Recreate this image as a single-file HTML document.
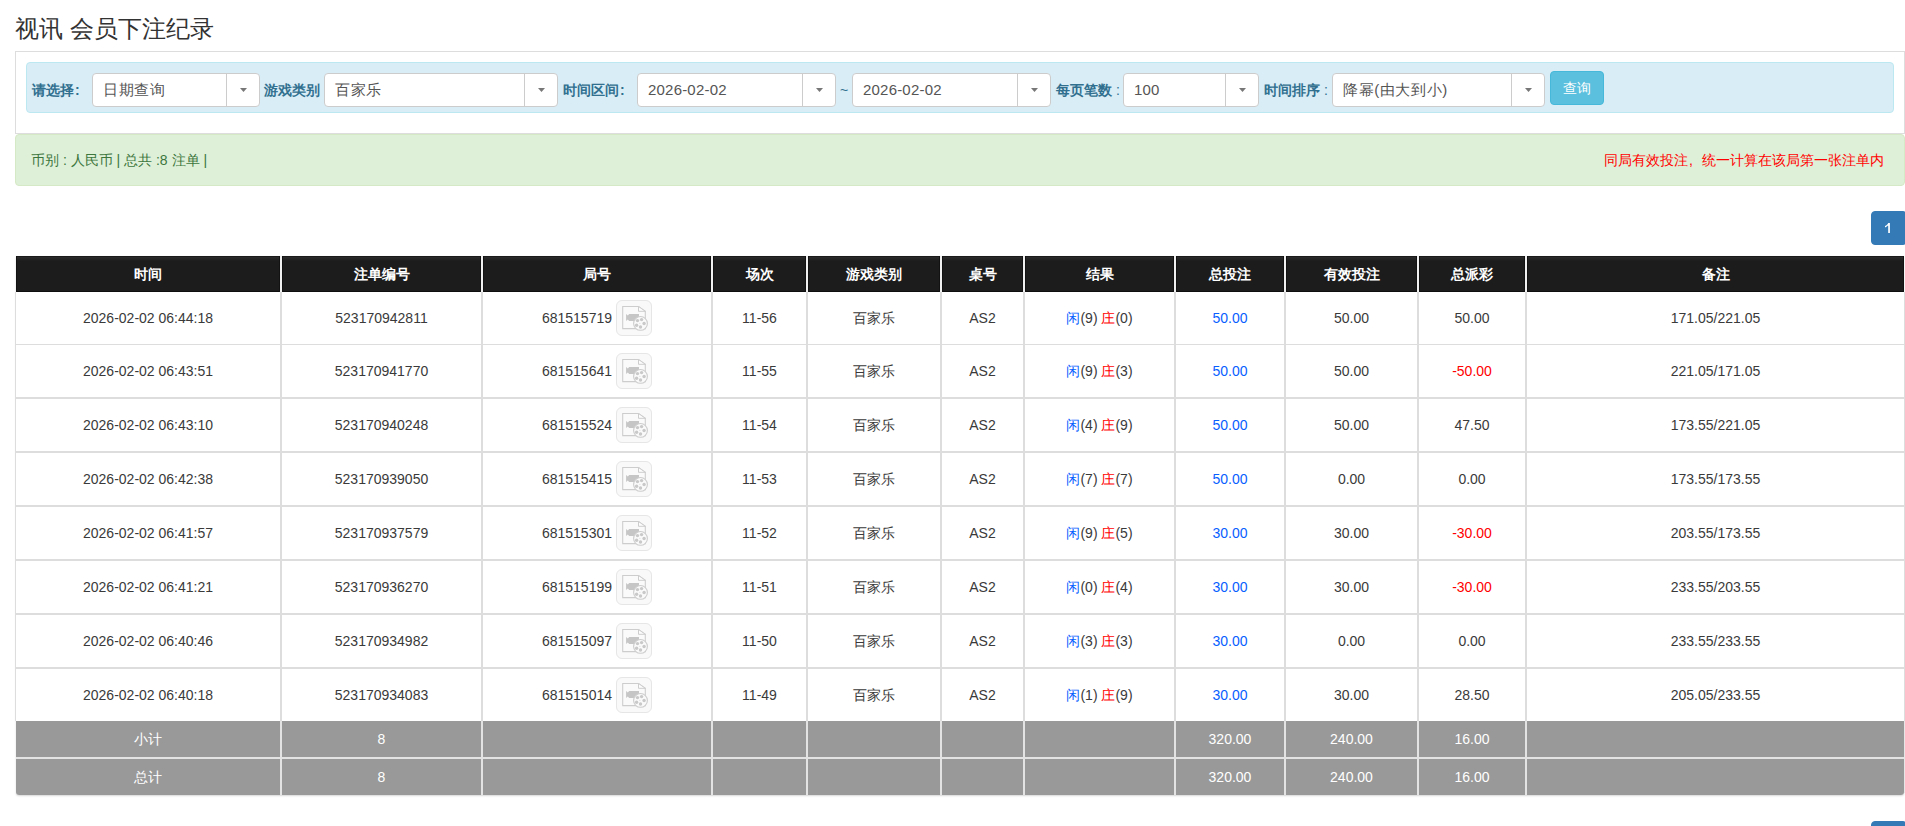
<!DOCTYPE html>
<html><head><meta charset="utf-8"><title>视讯 会员下注纪录</title>
<style>
*{box-sizing:border-box}
html,body{margin:0;padding:0;background:#fff;width:1905px;height:826px;overflow:hidden}
body{font-family:"Liberation Sans",sans-serif;color:#333;font-size:14px;position:relative}
.a{position:absolute;white-space:nowrap}
.title{left:15px;top:11px;font-size:24px;line-height:36px;color:#333}
.panel{left:15px;top:51px;width:1890px;height:83px;border:1px solid #ddd;background:#fff}
.bar{left:26px;top:62px;width:1868px;height:51px;background:#d9edf7;border:1px solid #bce8f1;border-radius:4px}
.lbl{font-weight:bold;color:#31708f;font-size:14px;line-height:20px;top:80px}
.sel{top:73px;height:34px;border:1px solid #ccc;border-radius:4px;background:#fff}
.sel .t{position:absolute;left:11px;top:0;line-height:32px;font-size:15px;color:#555}
.sel .d{position:absolute;top:0;bottom:0;width:1px;background:#ccc}
.sel .c2{position:absolute;top:14px}
.btn{left:1550px;top:71px;width:54px;height:34px;background:#5bc0de;border:1px solid #46b8da;border-radius:4px;color:#fff;font-size:14px;line-height:32px;text-align:center}
.alert{left:15px;top:134px;width:1890px;height:52px;background:#dff0d8;border:1px solid #d6e9c6;border-radius:4px}
.gtxt{left:31px;top:150px;line-height:20px;color:#3c763d;font-size:14px}
.rtxt{right:21px;top:150px;line-height:20px;color:#f00;font-size:14px}
.pg{left:1871px;width:36px;height:34px;background:#337ab7;border:1px solid #337ab7;border-radius:4px;color:#fff;font-size:14px;line-height:32px;text-align:center;padding-right:2px}
.tbl{left:16px;top:256px;width:1888px;height:539px;border-radius:0 0 3px 3px;box-shadow:0 1px 2px rgba(0,0,0,.16)}
.hd{left:16px;top:256px;width:1888px;height:36px;background:linear-gradient(#1a1a1a 0,#1a1a1a 1px,#2b2b2b 1px,#242424 3px,#1c1c1c 5px,#1c1c1c 35px,#0e0e0e 35px)}
.th{top:256px;height:36px;box-shadow:inset 1px 0 #121212,inset -1px 0 #121212;line-height:36px;color:#fff;font-weight:bold;text-align:center;font-size:14px}
.td{text-align:center;font-size:14px;color:#3a3a3a}
.gray{background:#999}
.vs{width:2px;background:#ddd}
.hs{background:#ddd;left:15px;width:1890px}
.b{color:#0860ff}
.r{color:#f00}
.ic{width:36px;height:36px;border:1px solid #e6e6e6;border-radius:6px;background:#f9f9f9}
.ic svg{position:absolute;left:-1px;top:-1px}
</style></head><body>
<div class="a title">视讯 会员下注纪录</div>
<div class="a panel"></div>
<div class="a bar"></div>

<div class="a lbl" style="left:32px">请选择<span style="margin-left:1px">:</span></div>
<div class="a sel" style="left:92px;width:168px"><div class="t" style="left:10px;letter-spacing:0.6px">日期查询</div><div class="d" style="left:133px"></div><svg class="c2" style="left:147.0px" width="7" height="4" viewBox="0 0 7 4"><path d="M0 0H7L3.5 4Z" fill="#777"/></svg></div>
<div class="a lbl" style="left:264px">游戏类别</div>
<div class="a sel" style="left:324px;width:234px"><div class="t" style="left:10px;letter-spacing:0.6px">百家乐</div><div class="d" style="left:199px"></div><svg class="c2" style="left:213.0px" width="7" height="4" viewBox="0 0 7 4"><path d="M0 0H7L3.5 4Z" fill="#777"/></svg></div>
<div class="a lbl" style="left:563px">时间区间<span style="margin-left:1px">:</span></div>
<div class="a sel" style="left:637px;width:199px"><div class="t" style="left:10px;letter-spacing:0.2px">2026-02-02</div><div class="d" style="left:164px"></div><svg class="c2" style="left:178.0px" width="7" height="4" viewBox="0 0 7 4"><path d="M0 0H7L3.5 4Z" fill="#777"/></svg></div>
<div class="a" style="left:840px;top:80px;line-height:20px;color:#31708f;font-size:14px">~</div>
<div class="a sel" style="left:852px;width:199px"><div class="t" style="left:10px;letter-spacing:0.2px">2026-02-02</div><div class="d" style="left:164px"></div><svg class="c2" style="left:178.0px" width="7" height="4" viewBox="0 0 7 4"><path d="M0 0H7L3.5 4Z" fill="#777"/></svg></div>
<div class="a lbl" style="left:1056px">每页笔数<span style="font-weight:normal"> :</span></div>
<div class="a sel" style="left:1123px;width:136px"><div class="t" style="left:10px;letter-spacing:0.2px">100</div><div class="d" style="left:101px"></div><svg class="c2" style="left:115.0px" width="7" height="4" viewBox="0 0 7 4"><path d="M0 0H7L3.5 4Z" fill="#777"/></svg></div>
<div class="a lbl" style="left:1264px">时间排序<span style="font-weight:normal"> :</span></div>
<div class="a sel" style="left:1332px;width:213px"><div class="t" style="left:10px;letter-spacing:0.6px">降幂(由大到小)</div><div class="d" style="left:178px"></div><svg class="c2" style="left:192.0px" width="7" height="4" viewBox="0 0 7 4"><path d="M0 0H7L3.5 4Z" fill="#777"/></svg></div>
<div class="a btn">查询</div>
<div class="a alert"></div>
<div class="a gtxt">币别 : 人民币 | 总共 :8 注单 |</div>
<div class="a rtxt">同局有效投注<span style="display:inline-block;width:14px;padding-left:1px">,</span>统一计算在该局第一张注单内</div>
<div class="a pg" style="top:211px"><svg style="position:absolute;left:12px;top:10px" width="10" height="12" viewBox="0 0 10 12"><path d="M4.2 1H5.9V11H4.2Z M4.2 1C3.7 2.4 2.6 3.4 1 3.9V5.4C2.3 5 3.4 4.3 4.2 3.3Z" fill="#fff"/></svg></div>
<div class="a pg" style="top:821px">1</div>
<div class="a tbl"></div>
<div class="a" style="left:15px;top:292px;width:1890px;height:429px;background:#fff;border-left:1px solid #ddd;border-right:1px solid #ddd"></div>
<div class="a hd"></div>
<div class="a th" style="left:16px;width:264px">时间</div>
<div class="a th" style="left:282px;width:199px">注单编号</div>
<div class="a th" style="left:483px;width:228px">局号</div>
<div class="a th" style="left:713px;width:93px">场次</div>
<div class="a th" style="left:808px;width:132px">游戏类别</div>
<div class="a th" style="left:942px;width:81px">桌号</div>
<div class="a th" style="left:1025px;width:149px">结果</div>
<div class="a th" style="left:1176px;width:108px">总投注</div>
<div class="a th" style="left:1286px;width:131px">有效投注</div>
<div class="a th" style="left:1419px;width:106px">总派彩</div>
<div class="a th" style="left:1527px;width:377px">备注</div>
<div class="a" style="left:280px;top:256px;width:2px;height:36px;background:#f0f0f0"></div>
<div class="a vs" style="left:280px;top:292px;height:429px"></div>
<div class="a" style="left:481px;top:256px;width:2px;height:36px;background:#f0f0f0"></div>
<div class="a vs" style="left:481px;top:292px;height:429px"></div>
<div class="a" style="left:711px;top:256px;width:2px;height:36px;background:#f0f0f0"></div>
<div class="a vs" style="left:711px;top:292px;height:429px"></div>
<div class="a" style="left:806px;top:256px;width:2px;height:36px;background:#f0f0f0"></div>
<div class="a vs" style="left:806px;top:292px;height:429px"></div>
<div class="a" style="left:940px;top:256px;width:2px;height:36px;background:#f0f0f0"></div>
<div class="a vs" style="left:940px;top:292px;height:429px"></div>
<div class="a" style="left:1023px;top:256px;width:2px;height:36px;background:#f0f0f0"></div>
<div class="a vs" style="left:1023px;top:292px;height:429px"></div>
<div class="a" style="left:1174px;top:256px;width:2px;height:36px;background:#f0f0f0"></div>
<div class="a vs" style="left:1174px;top:292px;height:429px"></div>
<div class="a" style="left:1284px;top:256px;width:2px;height:36px;background:#f0f0f0"></div>
<div class="a vs" style="left:1284px;top:292px;height:429px"></div>
<div class="a" style="left:1417px;top:256px;width:2px;height:36px;background:#f0f0f0"></div>
<div class="a vs" style="left:1417px;top:292px;height:429px"></div>
<div class="a" style="left:1525px;top:256px;width:2px;height:36px;background:#f0f0f0"></div>
<div class="a vs" style="left:1525px;top:292px;height:429px"></div>
<div class="a hs" style="top:344px;height:1px"></div>
<div class="a hs" style="top:397px;height:2px"></div>
<div class="a hs" style="top:451px;height:2px"></div>
<div class="a hs" style="top:505px;height:2px"></div>
<div class="a hs" style="top:559px;height:2px"></div>
<div class="a hs" style="top:613px;height:2px"></div>
<div class="a hs" style="top:667px;height:2px"></div>
<div class="a td" style="left:16px;top:292px;width:264px;height:52px;line-height:52px">2026-02-02 06:44:18</div>
<div class="a td" style="left:282px;top:292px;width:199px;height:52px;line-height:52px">523170942811</div>
<div class="a td" style="left:483px;top:292px;width:228px;height:52px;line-height:52px;text-align:left"><span class="a" style="right:99px;top:0">681515719</span><div class="a ic" style="left:133px;top:8px"><svg width="36" height="36" viewBox="0 0 36 36"><path d="M6.7 6.5H22.5L29.3 11.3V28.6H6.7Z" fill="#fafafa" stroke="#cdcdcd" stroke-width="1.1"/><path d="M22.5 6.5V11.3H29.3Z" fill="#fdfdfd" stroke="#cdcdcd" stroke-width="1" stroke-linejoin="round"/><path d="M10.1 14L11.8 15.6L13.2 14H23V21H13.2L11.8 19.4L10.1 21Z" fill="#c6c6c6"/><circle cx="24.5" cy="23.4" r="6.9" fill="#fafafa" stroke="#cdcdcd" stroke-width="1.1"/><circle cx="21.5" cy="20.6" r="1.7" fill="#c9c9c9"/><circle cx="25.6" cy="19.6" r="1.7" fill="#c9c9c9"/><circle cx="28.1" cy="23.5" r="1.7" fill="#c9c9c9"/><circle cx="24.5" cy="27" r="1.7" fill="#c9c9c9"/><circle cx="20.6" cy="25.3" r="1.7" fill="#c9c9c9"/><circle cx="23.9" cy="23.3" r="0.5" fill="#d0d0d0"/></svg></div></div>
<div class="a td" style="left:713px;top:292px;width:93px;height:52px;line-height:52px">11-56</div>
<div class="a td" style="left:808px;top:292px;width:132px;height:52px;line-height:52px">百家乐</div>
<div class="a td" style="left:942px;top:292px;width:81px;height:52px;line-height:52px">AS2</div>
<div class="a td" style="left:1025px;top:292px;width:149px;height:52px;line-height:52px"><span class="b">闲</span>(9) <span class="r">庄</span>(0)</div>
<div class="a td b" style="left:1176px;top:292px;width:108px;height:52px;line-height:52px">50.00</div>
<div class="a td" style="left:1286px;top:292px;width:131px;height:52px;line-height:52px">50.00</div>
<div class="a td " style="left:1419px;top:292px;width:106px;height:52px;line-height:52px">50.00</div>
<div class="a td" style="left:1527px;top:292px;width:377px;height:52px;line-height:52px">171.05/221.05</div>
<div class="a td" style="left:16px;top:345px;width:264px;height:52px;line-height:52px">2026-02-02 06:43:51</div>
<div class="a td" style="left:282px;top:345px;width:199px;height:52px;line-height:52px">523170941770</div>
<div class="a td" style="left:483px;top:345px;width:228px;height:52px;line-height:52px;text-align:left"><span class="a" style="right:99px;top:0">681515641</span><div class="a ic" style="left:133px;top:8px"><svg width="36" height="36" viewBox="0 0 36 36"><path d="M6.7 6.5H22.5L29.3 11.3V28.6H6.7Z" fill="#fafafa" stroke="#cdcdcd" stroke-width="1.1"/><path d="M22.5 6.5V11.3H29.3Z" fill="#fdfdfd" stroke="#cdcdcd" stroke-width="1" stroke-linejoin="round"/><path d="M10.1 14L11.8 15.6L13.2 14H23V21H13.2L11.8 19.4L10.1 21Z" fill="#c6c6c6"/><circle cx="24.5" cy="23.4" r="6.9" fill="#fafafa" stroke="#cdcdcd" stroke-width="1.1"/><circle cx="21.5" cy="20.6" r="1.7" fill="#c9c9c9"/><circle cx="25.6" cy="19.6" r="1.7" fill="#c9c9c9"/><circle cx="28.1" cy="23.5" r="1.7" fill="#c9c9c9"/><circle cx="24.5" cy="27" r="1.7" fill="#c9c9c9"/><circle cx="20.6" cy="25.3" r="1.7" fill="#c9c9c9"/><circle cx="23.9" cy="23.3" r="0.5" fill="#d0d0d0"/></svg></div></div>
<div class="a td" style="left:713px;top:345px;width:93px;height:52px;line-height:52px">11-55</div>
<div class="a td" style="left:808px;top:345px;width:132px;height:52px;line-height:52px">百家乐</div>
<div class="a td" style="left:942px;top:345px;width:81px;height:52px;line-height:52px">AS2</div>
<div class="a td" style="left:1025px;top:345px;width:149px;height:52px;line-height:52px"><span class="b">闲</span>(9) <span class="r">庄</span>(3)</div>
<div class="a td b" style="left:1176px;top:345px;width:108px;height:52px;line-height:52px">50.00</div>
<div class="a td" style="left:1286px;top:345px;width:131px;height:52px;line-height:52px">50.00</div>
<div class="a td r" style="left:1419px;top:345px;width:106px;height:52px;line-height:52px">-50.00</div>
<div class="a td" style="left:1527px;top:345px;width:377px;height:52px;line-height:52px">221.05/171.05</div>
<div class="a td" style="left:16px;top:399px;width:264px;height:52px;line-height:52px">2026-02-02 06:43:10</div>
<div class="a td" style="left:282px;top:399px;width:199px;height:52px;line-height:52px">523170940248</div>
<div class="a td" style="left:483px;top:399px;width:228px;height:52px;line-height:52px;text-align:left"><span class="a" style="right:99px;top:0">681515524</span><div class="a ic" style="left:133px;top:8px"><svg width="36" height="36" viewBox="0 0 36 36"><path d="M6.7 6.5H22.5L29.3 11.3V28.6H6.7Z" fill="#fafafa" stroke="#cdcdcd" stroke-width="1.1"/><path d="M22.5 6.5V11.3H29.3Z" fill="#fdfdfd" stroke="#cdcdcd" stroke-width="1" stroke-linejoin="round"/><path d="M10.1 14L11.8 15.6L13.2 14H23V21H13.2L11.8 19.4L10.1 21Z" fill="#c6c6c6"/><circle cx="24.5" cy="23.4" r="6.9" fill="#fafafa" stroke="#cdcdcd" stroke-width="1.1"/><circle cx="21.5" cy="20.6" r="1.7" fill="#c9c9c9"/><circle cx="25.6" cy="19.6" r="1.7" fill="#c9c9c9"/><circle cx="28.1" cy="23.5" r="1.7" fill="#c9c9c9"/><circle cx="24.5" cy="27" r="1.7" fill="#c9c9c9"/><circle cx="20.6" cy="25.3" r="1.7" fill="#c9c9c9"/><circle cx="23.9" cy="23.3" r="0.5" fill="#d0d0d0"/></svg></div></div>
<div class="a td" style="left:713px;top:399px;width:93px;height:52px;line-height:52px">11-54</div>
<div class="a td" style="left:808px;top:399px;width:132px;height:52px;line-height:52px">百家乐</div>
<div class="a td" style="left:942px;top:399px;width:81px;height:52px;line-height:52px">AS2</div>
<div class="a td" style="left:1025px;top:399px;width:149px;height:52px;line-height:52px"><span class="b">闲</span>(4) <span class="r">庄</span>(9)</div>
<div class="a td b" style="left:1176px;top:399px;width:108px;height:52px;line-height:52px">50.00</div>
<div class="a td" style="left:1286px;top:399px;width:131px;height:52px;line-height:52px">50.00</div>
<div class="a td " style="left:1419px;top:399px;width:106px;height:52px;line-height:52px">47.50</div>
<div class="a td" style="left:1527px;top:399px;width:377px;height:52px;line-height:52px">173.55/221.05</div>
<div class="a td" style="left:16px;top:453px;width:264px;height:52px;line-height:52px">2026-02-02 06:42:38</div>
<div class="a td" style="left:282px;top:453px;width:199px;height:52px;line-height:52px">523170939050</div>
<div class="a td" style="left:483px;top:453px;width:228px;height:52px;line-height:52px;text-align:left"><span class="a" style="right:99px;top:0">681515415</span><div class="a ic" style="left:133px;top:8px"><svg width="36" height="36" viewBox="0 0 36 36"><path d="M6.7 6.5H22.5L29.3 11.3V28.6H6.7Z" fill="#fafafa" stroke="#cdcdcd" stroke-width="1.1"/><path d="M22.5 6.5V11.3H29.3Z" fill="#fdfdfd" stroke="#cdcdcd" stroke-width="1" stroke-linejoin="round"/><path d="M10.1 14L11.8 15.6L13.2 14H23V21H13.2L11.8 19.4L10.1 21Z" fill="#c6c6c6"/><circle cx="24.5" cy="23.4" r="6.9" fill="#fafafa" stroke="#cdcdcd" stroke-width="1.1"/><circle cx="21.5" cy="20.6" r="1.7" fill="#c9c9c9"/><circle cx="25.6" cy="19.6" r="1.7" fill="#c9c9c9"/><circle cx="28.1" cy="23.5" r="1.7" fill="#c9c9c9"/><circle cx="24.5" cy="27" r="1.7" fill="#c9c9c9"/><circle cx="20.6" cy="25.3" r="1.7" fill="#c9c9c9"/><circle cx="23.9" cy="23.3" r="0.5" fill="#d0d0d0"/></svg></div></div>
<div class="a td" style="left:713px;top:453px;width:93px;height:52px;line-height:52px">11-53</div>
<div class="a td" style="left:808px;top:453px;width:132px;height:52px;line-height:52px">百家乐</div>
<div class="a td" style="left:942px;top:453px;width:81px;height:52px;line-height:52px">AS2</div>
<div class="a td" style="left:1025px;top:453px;width:149px;height:52px;line-height:52px"><span class="b">闲</span>(7) <span class="r">庄</span>(7)</div>
<div class="a td b" style="left:1176px;top:453px;width:108px;height:52px;line-height:52px">50.00</div>
<div class="a td" style="left:1286px;top:453px;width:131px;height:52px;line-height:52px">0.00</div>
<div class="a td " style="left:1419px;top:453px;width:106px;height:52px;line-height:52px">0.00</div>
<div class="a td" style="left:1527px;top:453px;width:377px;height:52px;line-height:52px">173.55/173.55</div>
<div class="a td" style="left:16px;top:507px;width:264px;height:52px;line-height:52px">2026-02-02 06:41:57</div>
<div class="a td" style="left:282px;top:507px;width:199px;height:52px;line-height:52px">523170937579</div>
<div class="a td" style="left:483px;top:507px;width:228px;height:52px;line-height:52px;text-align:left"><span class="a" style="right:99px;top:0">681515301</span><div class="a ic" style="left:133px;top:8px"><svg width="36" height="36" viewBox="0 0 36 36"><path d="M6.7 6.5H22.5L29.3 11.3V28.6H6.7Z" fill="#fafafa" stroke="#cdcdcd" stroke-width="1.1"/><path d="M22.5 6.5V11.3H29.3Z" fill="#fdfdfd" stroke="#cdcdcd" stroke-width="1" stroke-linejoin="round"/><path d="M10.1 14L11.8 15.6L13.2 14H23V21H13.2L11.8 19.4L10.1 21Z" fill="#c6c6c6"/><circle cx="24.5" cy="23.4" r="6.9" fill="#fafafa" stroke="#cdcdcd" stroke-width="1.1"/><circle cx="21.5" cy="20.6" r="1.7" fill="#c9c9c9"/><circle cx="25.6" cy="19.6" r="1.7" fill="#c9c9c9"/><circle cx="28.1" cy="23.5" r="1.7" fill="#c9c9c9"/><circle cx="24.5" cy="27" r="1.7" fill="#c9c9c9"/><circle cx="20.6" cy="25.3" r="1.7" fill="#c9c9c9"/><circle cx="23.9" cy="23.3" r="0.5" fill="#d0d0d0"/></svg></div></div>
<div class="a td" style="left:713px;top:507px;width:93px;height:52px;line-height:52px">11-52</div>
<div class="a td" style="left:808px;top:507px;width:132px;height:52px;line-height:52px">百家乐</div>
<div class="a td" style="left:942px;top:507px;width:81px;height:52px;line-height:52px">AS2</div>
<div class="a td" style="left:1025px;top:507px;width:149px;height:52px;line-height:52px"><span class="b">闲</span>(9) <span class="r">庄</span>(5)</div>
<div class="a td b" style="left:1176px;top:507px;width:108px;height:52px;line-height:52px">30.00</div>
<div class="a td" style="left:1286px;top:507px;width:131px;height:52px;line-height:52px">30.00</div>
<div class="a td r" style="left:1419px;top:507px;width:106px;height:52px;line-height:52px">-30.00</div>
<div class="a td" style="left:1527px;top:507px;width:377px;height:52px;line-height:52px">203.55/173.55</div>
<div class="a td" style="left:16px;top:561px;width:264px;height:52px;line-height:52px">2026-02-02 06:41:21</div>
<div class="a td" style="left:282px;top:561px;width:199px;height:52px;line-height:52px">523170936270</div>
<div class="a td" style="left:483px;top:561px;width:228px;height:52px;line-height:52px;text-align:left"><span class="a" style="right:99px;top:0">681515199</span><div class="a ic" style="left:133px;top:8px"><svg width="36" height="36" viewBox="0 0 36 36"><path d="M6.7 6.5H22.5L29.3 11.3V28.6H6.7Z" fill="#fafafa" stroke="#cdcdcd" stroke-width="1.1"/><path d="M22.5 6.5V11.3H29.3Z" fill="#fdfdfd" stroke="#cdcdcd" stroke-width="1" stroke-linejoin="round"/><path d="M10.1 14L11.8 15.6L13.2 14H23V21H13.2L11.8 19.4L10.1 21Z" fill="#c6c6c6"/><circle cx="24.5" cy="23.4" r="6.9" fill="#fafafa" stroke="#cdcdcd" stroke-width="1.1"/><circle cx="21.5" cy="20.6" r="1.7" fill="#c9c9c9"/><circle cx="25.6" cy="19.6" r="1.7" fill="#c9c9c9"/><circle cx="28.1" cy="23.5" r="1.7" fill="#c9c9c9"/><circle cx="24.5" cy="27" r="1.7" fill="#c9c9c9"/><circle cx="20.6" cy="25.3" r="1.7" fill="#c9c9c9"/><circle cx="23.9" cy="23.3" r="0.5" fill="#d0d0d0"/></svg></div></div>
<div class="a td" style="left:713px;top:561px;width:93px;height:52px;line-height:52px">11-51</div>
<div class="a td" style="left:808px;top:561px;width:132px;height:52px;line-height:52px">百家乐</div>
<div class="a td" style="left:942px;top:561px;width:81px;height:52px;line-height:52px">AS2</div>
<div class="a td" style="left:1025px;top:561px;width:149px;height:52px;line-height:52px"><span class="b">闲</span>(0) <span class="r">庄</span>(4)</div>
<div class="a td b" style="left:1176px;top:561px;width:108px;height:52px;line-height:52px">30.00</div>
<div class="a td" style="left:1286px;top:561px;width:131px;height:52px;line-height:52px">30.00</div>
<div class="a td r" style="left:1419px;top:561px;width:106px;height:52px;line-height:52px">-30.00</div>
<div class="a td" style="left:1527px;top:561px;width:377px;height:52px;line-height:52px">233.55/203.55</div>
<div class="a td" style="left:16px;top:615px;width:264px;height:52px;line-height:52px">2026-02-02 06:40:46</div>
<div class="a td" style="left:282px;top:615px;width:199px;height:52px;line-height:52px">523170934982</div>
<div class="a td" style="left:483px;top:615px;width:228px;height:52px;line-height:52px;text-align:left"><span class="a" style="right:99px;top:0">681515097</span><div class="a ic" style="left:133px;top:8px"><svg width="36" height="36" viewBox="0 0 36 36"><path d="M6.7 6.5H22.5L29.3 11.3V28.6H6.7Z" fill="#fafafa" stroke="#cdcdcd" stroke-width="1.1"/><path d="M22.5 6.5V11.3H29.3Z" fill="#fdfdfd" stroke="#cdcdcd" stroke-width="1" stroke-linejoin="round"/><path d="M10.1 14L11.8 15.6L13.2 14H23V21H13.2L11.8 19.4L10.1 21Z" fill="#c6c6c6"/><circle cx="24.5" cy="23.4" r="6.9" fill="#fafafa" stroke="#cdcdcd" stroke-width="1.1"/><circle cx="21.5" cy="20.6" r="1.7" fill="#c9c9c9"/><circle cx="25.6" cy="19.6" r="1.7" fill="#c9c9c9"/><circle cx="28.1" cy="23.5" r="1.7" fill="#c9c9c9"/><circle cx="24.5" cy="27" r="1.7" fill="#c9c9c9"/><circle cx="20.6" cy="25.3" r="1.7" fill="#c9c9c9"/><circle cx="23.9" cy="23.3" r="0.5" fill="#d0d0d0"/></svg></div></div>
<div class="a td" style="left:713px;top:615px;width:93px;height:52px;line-height:52px">11-50</div>
<div class="a td" style="left:808px;top:615px;width:132px;height:52px;line-height:52px">百家乐</div>
<div class="a td" style="left:942px;top:615px;width:81px;height:52px;line-height:52px">AS2</div>
<div class="a td" style="left:1025px;top:615px;width:149px;height:52px;line-height:52px"><span class="b">闲</span>(3) <span class="r">庄</span>(3)</div>
<div class="a td b" style="left:1176px;top:615px;width:108px;height:52px;line-height:52px">30.00</div>
<div class="a td" style="left:1286px;top:615px;width:131px;height:52px;line-height:52px">0.00</div>
<div class="a td " style="left:1419px;top:615px;width:106px;height:52px;line-height:52px">0.00</div>
<div class="a td" style="left:1527px;top:615px;width:377px;height:52px;line-height:52px">233.55/233.55</div>
<div class="a td" style="left:16px;top:669px;width:264px;height:52px;line-height:52px">2026-02-02 06:40:18</div>
<div class="a td" style="left:282px;top:669px;width:199px;height:52px;line-height:52px">523170934083</div>
<div class="a td" style="left:483px;top:669px;width:228px;height:52px;line-height:52px;text-align:left"><span class="a" style="right:99px;top:0">681515014</span><div class="a ic" style="left:133px;top:8px"><svg width="36" height="36" viewBox="0 0 36 36"><path d="M6.7 6.5H22.5L29.3 11.3V28.6H6.7Z" fill="#fafafa" stroke="#cdcdcd" stroke-width="1.1"/><path d="M22.5 6.5V11.3H29.3Z" fill="#fdfdfd" stroke="#cdcdcd" stroke-width="1" stroke-linejoin="round"/><path d="M10.1 14L11.8 15.6L13.2 14H23V21H13.2L11.8 19.4L10.1 21Z" fill="#c6c6c6"/><circle cx="24.5" cy="23.4" r="6.9" fill="#fafafa" stroke="#cdcdcd" stroke-width="1.1"/><circle cx="21.5" cy="20.6" r="1.7" fill="#c9c9c9"/><circle cx="25.6" cy="19.6" r="1.7" fill="#c9c9c9"/><circle cx="28.1" cy="23.5" r="1.7" fill="#c9c9c9"/><circle cx="24.5" cy="27" r="1.7" fill="#c9c9c9"/><circle cx="20.6" cy="25.3" r="1.7" fill="#c9c9c9"/><circle cx="23.9" cy="23.3" r="0.5" fill="#d0d0d0"/></svg></div></div>
<div class="a td" style="left:713px;top:669px;width:93px;height:52px;line-height:52px">11-49</div>
<div class="a td" style="left:808px;top:669px;width:132px;height:52px;line-height:52px">百家乐</div>
<div class="a td" style="left:942px;top:669px;width:81px;height:52px;line-height:52px">AS2</div>
<div class="a td" style="left:1025px;top:669px;width:149px;height:52px;line-height:52px"><span class="b">闲</span>(1) <span class="r">庄</span>(9)</div>
<div class="a td b" style="left:1176px;top:669px;width:108px;height:52px;line-height:52px">30.00</div>
<div class="a td" style="left:1286px;top:669px;width:131px;height:52px;line-height:52px">30.00</div>
<div class="a td " style="left:1419px;top:669px;width:106px;height:52px;line-height:52px">28.50</div>
<div class="a td" style="left:1527px;top:669px;width:377px;height:52px;line-height:52px">205.05/233.55</div>
<div class="a gray" style="left:16px;top:721px;width:1888px;height:36px"></div>
<div class="a td" style="left:16px;top:721px;width:264px;height:36px;line-height:36px;color:#fff">小计</div>
<div class="a td" style="left:282px;top:721px;width:199px;height:36px;line-height:36px;color:#fff">8</div>
<div class="a td" style="left:1176px;top:721px;width:108px;height:36px;line-height:36px;color:#fff">320.00</div>
<div class="a td" style="left:1286px;top:721px;width:131px;height:36px;line-height:36px;color:#fff">240.00</div>
<div class="a td" style="left:1419px;top:721px;width:106px;height:36px;line-height:36px;color:#fff">16.00</div>
<div class="a gray" style="left:16px;top:759px;width:1888px;height:36px;border-radius:0 0 3px 3px"></div>
<div class="a td" style="left:16px;top:759px;width:264px;height:36px;line-height:36px;color:#fff">总计</div>
<div class="a td" style="left:282px;top:759px;width:199px;height:36px;line-height:36px;color:#fff">8</div>
<div class="a td" style="left:1176px;top:759px;width:108px;height:36px;line-height:36px;color:#fff">320.00</div>
<div class="a td" style="left:1286px;top:759px;width:131px;height:36px;line-height:36px;color:#fff">240.00</div>
<div class="a td" style="left:1419px;top:759px;width:106px;height:36px;line-height:36px;color:#fff">16.00</div>
<div class="a" style="left:16px;top:757px;width:1888px;height:2px;background:#e3e3e3"></div>
<div class="a" style="left:1904px;top:721px;width:1px;height:72px;background:#e6e6e6"></div>
<div class="a" style="left:280px;top:721px;width:2px;height:74px;background:#e3e3e3"></div>
<div class="a" style="left:481px;top:721px;width:2px;height:74px;background:#e3e3e3"></div>
<div class="a" style="left:711px;top:721px;width:2px;height:74px;background:#e3e3e3"></div>
<div class="a" style="left:806px;top:721px;width:2px;height:74px;background:#e3e3e3"></div>
<div class="a" style="left:940px;top:721px;width:2px;height:74px;background:#e3e3e3"></div>
<div class="a" style="left:1023px;top:721px;width:2px;height:74px;background:#e3e3e3"></div>
<div class="a" style="left:1174px;top:721px;width:2px;height:74px;background:#e3e3e3"></div>
<div class="a" style="left:1284px;top:721px;width:2px;height:74px;background:#e3e3e3"></div>
<div class="a" style="left:1417px;top:721px;width:2px;height:74px;background:#e3e3e3"></div>
<div class="a" style="left:1525px;top:721px;width:2px;height:74px;background:#e3e3e3"></div>
</body></html>
